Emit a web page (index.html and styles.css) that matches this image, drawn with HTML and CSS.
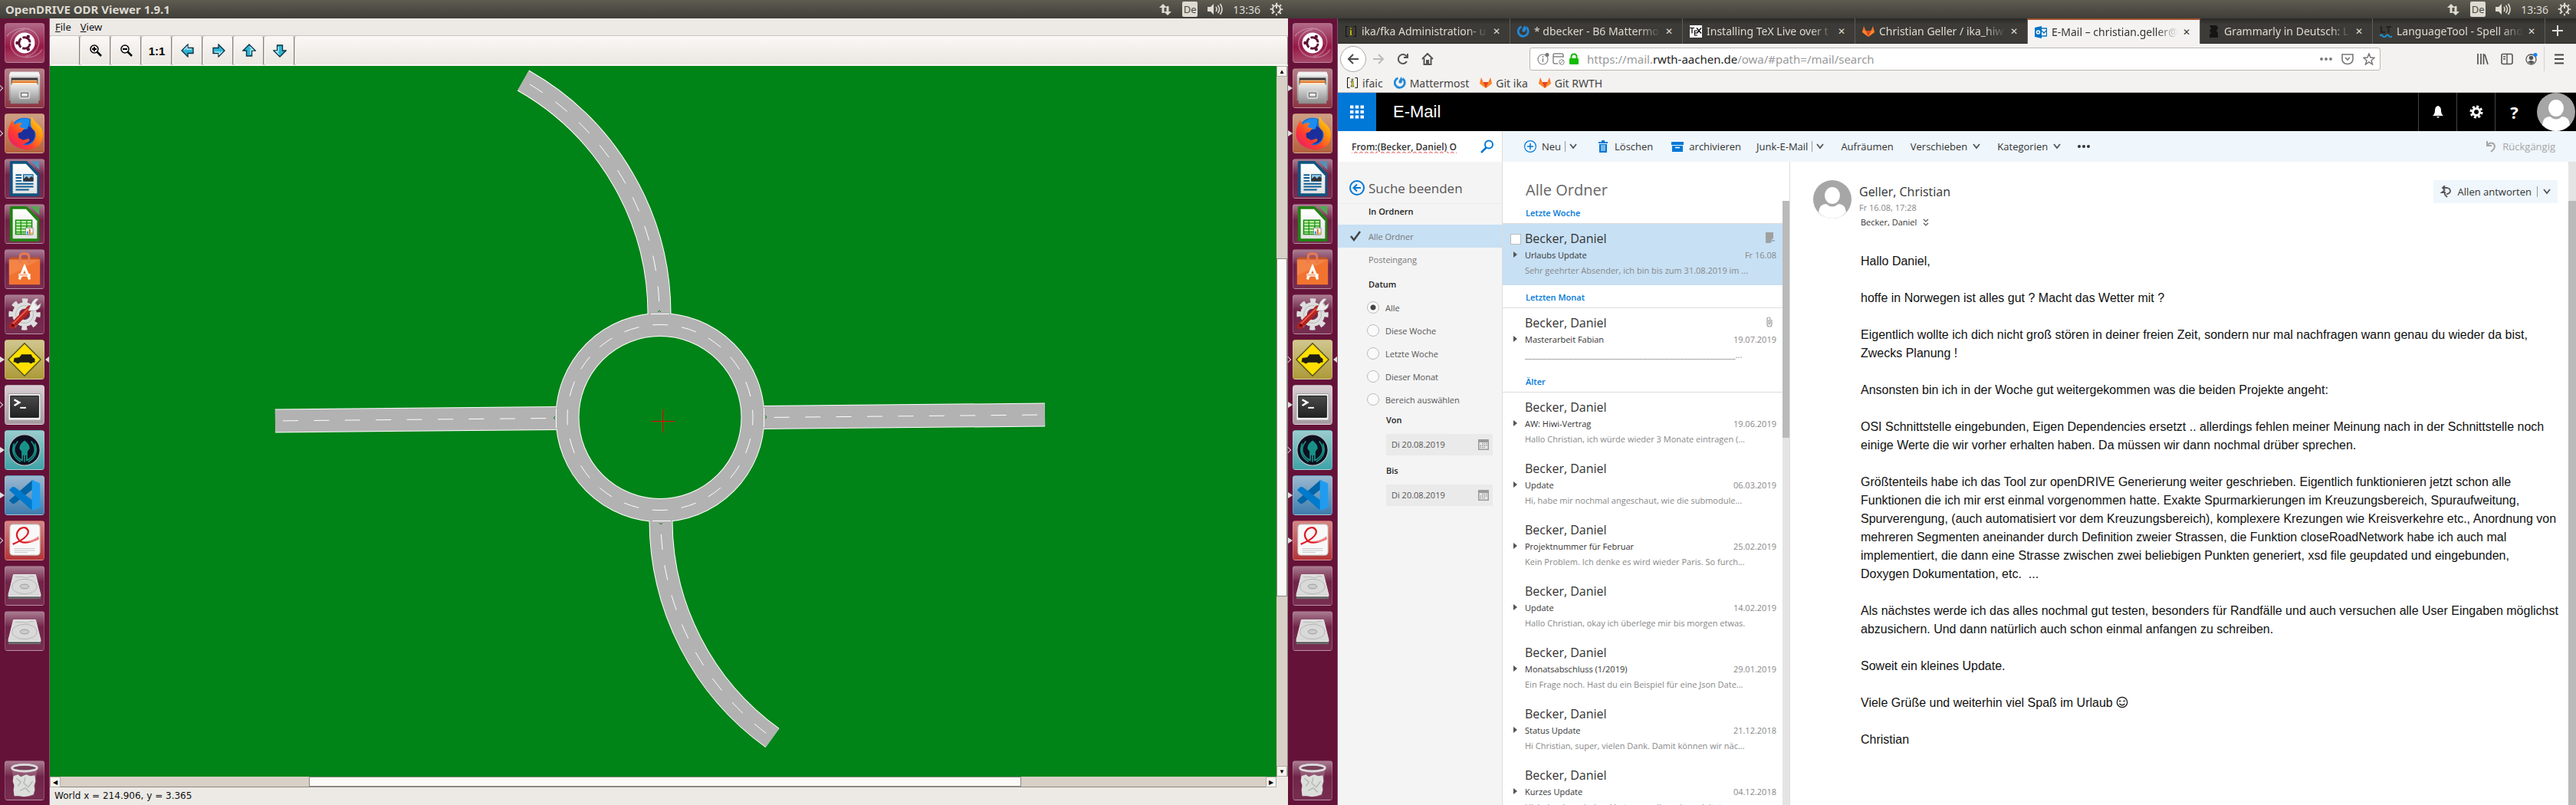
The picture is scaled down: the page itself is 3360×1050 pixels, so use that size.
FILE: index.html
```html
<!DOCTYPE html>
<html lang="de">
<head>
<meta charset="utf-8">
<title>Desktop</title>
<link rel="stylesheet" href="styles.css">
</head>
<body>
<svg class="defs" aria-hidden="true">
  <defs>
    <linearGradient id="metal" x1="0" y1="0" x2="0" y2="1"><stop offset="0" stop-color="#e8e8e8"/><stop offset="1" stop-color="#8a8a8a"/></linearGradient>
    <linearGradient id="paper" x1="0" y1="0" x2="0" y2="1"><stop offset="0" stop-color="#fff"/><stop offset="1" stop-color="#e2e2e2"/></linearGradient>
    <linearGradient id="fox" x1="0" y1="1" x2="1" y2="0"><stop offset="0" stop-color="#e3127a"/><stop offset=".35" stop-color="#ff3b30"/><stop offset=".7" stop-color="#ff9a0c"/><stop offset="1" stop-color="#ffe63b"/></linearGradient>
    <linearGradient id="screen" x1="0" y1="0" x2="0" y2="1"><stop offset="0" stop-color="#4a4a4a"/><stop offset="1" stop-color="#222"/></linearGradient>
  </defs>
  <symbol id="i-dash" viewBox="0 0 52 52">
    <path d="M2 17C12 4 34 2 43 16c7 12-2 27-16 28M50 35c-9 14-33 14-41 0C3 22 12 9 26 8" fill="none" stroke="#fff" stroke-opacity=".3" stroke-width="1.5"/>
    <circle cx="26" cy="26" r="14" fill="#fff"/>
    <circle cx="26" cy="26" r="7.500" fill="none" stroke="#5e1235" stroke-width="3" stroke-dasharray="13.700 2" stroke-dashoffset="-1"/>
    <g fill="#5e1235"><circle cx="16" cy="26" r="2.300"/><circle cx="31" cy="17.300" r="2.300"/><circle cx="31" cy="34.700" r="2.300"/></g>
  </symbol>
  <symbol id="i-files" viewBox="0 0 52 52">
    <path d="M7 4h38l2 5v34H5V9z" fill="url(#metal)"/><path d="M5 9l2-5h38l2 5z" fill="#f2f2f2"/>
    <path d="M8 12h36v10H8z" fill="#3a3a3a"/><path d="M9 15h34v7H9z" fill="#f6b87c"/><path d="M9 17h34v2H9z" fill="#e07020"/><path d="M9 19h34v2H9z" fill="#fff3e0"/>
    <path d="M7 21h38v26H7z" fill="url(#metal)"/><rect x="19" y="30" width="14" height="10" rx="2" fill="#c8c8c8" stroke="#ddd"/><rect x="21.500" y="32.500" width="9" height="5" fill="#eee" stroke="#555"/>
  </symbol>
  <symbol id="i-firefox" viewBox="0 0 52 52">
    <circle cx="26" cy="25" r="20" fill="#0a6fe0"/><circle cx="28" cy="28" r="12" fill="#1b2f9c"/><path d="M13 12q10-9 20-5l-3 13-15 2z" fill="#1c8df0"/>
    <path d="M5 17l4-9 4 6q4-3 10-2-4 3-3 6l6 1-4 5-5 2 1 6 6 3 8-2q2 3-2 5l-6 3q8 3 14-4 5-7 2-14-6-4-6-12 0-5 2-8 3 7 9 11 6 6 6 14 0 18-21 20Q8 46 4 31q-1-8 1-14z" fill="url(#fox)"/>
  </symbol>
  <symbol id="i-writer" viewBox="0 0 52 52">
    <path d="M6 4q0-2 2-2h21l17 17v29q0 2-2 2H8q-2 0-2-2z" fill="#10547f"/><path d="M34 2h12v12z" fill="#5a8fb5"/>
    <path d="M10 6h18l15 16v24H10z" fill="url(#paper)"/>
    <path d="M14 21h8M14 25h8M14 29h8M14 33h24M14 37h24M14 41h18" stroke="#0d5c91" stroke-width="2"/>
    <rect x="24.500" y="20.500" width="13" height="9" fill="#8ec9ec" stroke="#0d4c78"/><path d="M25 29v-3l4-3 3 3 3-3 3 2v4z" fill="#333"/>
  </symbol>
  <symbol id="i-calc" viewBox="0 0 52 52">
    <path d="M6 4q0-2 2-2h21l17 17v29q0 2-2 2H8q-2 0-2-2z" fill="#1f8312"/><path d="M34 2h12v12z" fill="#55a853"/>
    <path d="M10 6h18l15 16v24H10z" fill="url(#paper)"/>
    <path d="M14 21h22v19H14z" fill="#baf0a8" stroke="#188a0c" stroke-width="1.500"/><path d="M14 25h22M14 29h22M14 33h22M14 37h22M21 21v19M29 21v19" stroke="#188a0c" stroke-width="1.200"/>
    <path d="M27.500 31.500h10v9h-10z" fill="#fff" stroke="#888"/><path d="M29 36h2v4h-2z" fill="#1c90e0"/><path d="M32 33h2v7h-2z" fill="#e0601c"/><path d="M35 37h2v3h-2z" fill="#e8b81c"/>
  </symbol>
  <symbol id="i-software" viewBox="0 0 52 52">
    <path d="M5 13l2-3h38l2 3z" fill="#c25428"/><path d="M5 13h42v34H5z" fill="#f1732f"/><path d="M5 13h42l-42 22z" fill="#f59055" opacity=".6"/>
    <path d="M20 18V9q0-4 6-4t6 4v9" fill="none" stroke="#e87a50" stroke-width="3"/>
    <path d="M19 40l7-17 7 17M18 34h16" fill="none" stroke="#fff" stroke-width="3.500"/><path d="M19 34h11" stroke="#f1732f" stroke-width="1"/>
  </symbol>
  <symbol id="i-settings" viewBox="0 0 52 52">
    <circle cx="26" cy="26" r="12" fill="none" stroke="#dedede" stroke-width="9"/>
    <circle cx="26" cy="26" r="18.500" fill="none" stroke="#dedede" stroke-width="6" stroke-dasharray="7.300 7.230" stroke-dashoffset="3.600"/>
    <circle cx="26" cy="26" r="12" fill="none" stroke="#b5b5b5" stroke-width="1"/>
    <path d="M9 42L33 18" stroke="#b3221d" stroke-width="8" stroke-linecap="round"/><path d="M10 39L31 18" stroke="#e45b50" stroke-width="2"/>
    <path d="M31 21l5-11q4-7 9-5l-5 6 3 4 5-4q0 8-8 10z" fill="#eee" stroke="#999" stroke-width=".7"/><circle cx="10" cy="41" r="2" fill="#601"/>
  </symbol>
  <symbol id="i-odr" viewBox="0 0 52 52">
    <path d="M26 4L48 26 26 48 4 26z" fill="#ffdf00" stroke="#55501a" stroke-width="1.500" stroke-linejoin="round"/>
    <path d="M12 24l7-1 3-4h13l2 4 3 2v5h-3q-2 3-5 0H20q-3 3-6 0l-3-1z" fill="#1d1d14"/>
  </symbol>
  <symbol id="i-term" viewBox="0 0 52 52">
    <rect x="4" y="11" width="44" height="36" rx="1" fill="#eee" stroke="#999"/><path d="M7 14h38v29H7z" fill="url(#screen)" stroke="#111"/>
    <path d="M12 19l7 4-7 4" fill="none" stroke="#fff" stroke-width="2.500"/><path d="M20 30h8" stroke="#fff" stroke-width="2"/>
  </symbol>
  <symbol id="i-kraken" viewBox="0 0 52 52">
    <circle cx="26" cy="26" r="21" fill="#0e0f1e" stroke="#b8c4c8" stroke-width="1.200"/>
    <path d="M26 13q7 5 7 11l-3 4v5h-8v-5l-3-4q0-6 7-11z" fill="#179287"/>
    <path d="M17 14q-10 12 0 22 3 3 6 4v-9M35 14q10 12 0 22-3 3-6 4v-9M12 17q-6 16 9 25M40 17q6 16-9 25M26 31v11" fill="none" stroke="#179287" stroke-width="1.700"/>
  </symbol>
  <symbol id="i-code" viewBox="0 0 52 52">
    <path d="M5 33l4 4q2 1 4 0L37 18V5z" fill="#0065a9"/><path d="M5 19l4-4q2-1 4 0l24 18v14z" fill="#007acc"/><path d="M36 5l11 5v32l-11 5z" fill="#1f9cf0"/>
  </symbol>
  <symbol id="i-pdf" viewBox="0 0 52 52">
    <rect x="6" y="4" width="41" height="42" rx="4" fill="#f8f8f8" stroke="#b9b0b0"/>
    <path d="M10 31Q32 22 31 13q-3-7-11-3-9 8 0 17 9 5 25-4" fill="none" stroke="#dd1c25" stroke-width="2.400"/><path d="M27 27q10 0 18-7v5q-8 5-18 2z" fill="#f08080"/>
    <path d="M12 37h28M12 39.500h28M12 42h18" stroke="#c8c8c8"/>
  </symbol>
  <symbol id="i-disk" viewBox="0 0 52 52">
    <path d="M11 11h30l7 28H4z" fill="#d9d9d9" stroke="#eee"/><path d="M4 39h44v5H4z" fill="#6a6a6a"/><path d="M4 39h44v1.500H4z" fill="#fafafa"/>
    <ellipse cx="26" cy="27" rx="17" ry="10" fill="none" stroke="#b4b4b4"/><ellipse cx="26" cy="27" rx="6" ry="3" fill="#ccc" stroke="#999"/><path d="M14 14h9q8 3 10-1h6" fill="none" stroke="#bbb"/>
  </symbol>
  <symbol id="i-trash" viewBox="0 0 52 52">
    <path d="M9 10l4 36q13 4 26 0l4-36z" fill="#fff" fill-opacity=".18"/>
    <path d="M11 20l6-2 4 3 7-3 6 2 6-1 1 8-2 6 1 6-2 6-6 2-7 1-6-1-7 0-1-8 1-6-2-6z" fill="#dcdedb"/><path d="M15 23l6 5-4 6M27 22l-2 8 6 5 6-8M20 40l7-4 6 6" fill="none" stroke="#b4b8b2" stroke-width="1.500"/>
    <ellipse cx="26" cy="9" rx="17" ry="4.500" fill="#764059" stroke="#ddd" stroke-width="3"/>
  </symbol>
  <symbol id="i-net" viewBox="0 0 18 18"><path d="M6 2l5 5H7.500v7h-3V7H1zM12 17l-5-5h3.500V5h3v7H17z"/></symbol>
  <symbol id="i-sound" viewBox="0 0 22 18"><path d="M1 6h4l4-4v14l-4-4H1z"/><path d="M12 6q2 3 0 6M14.500 4q4 5 0 10M17.500 2q5 7 0 14" fill="none" stroke="#dfdbd2" stroke-width="1.600"/></symbol>
  <symbol id="i-power" viewBox="0 0 18 18"><circle cx="9" cy="9" r="5" fill="none" stroke="#dfdbd2" stroke-width="2" stroke-dasharray="27 4.400" stroke-dashoffset="21"/><circle cx="9" cy="9" r="7" fill="none" stroke="#dfdbd2" stroke-width="2.600" stroke-dasharray="2 3.500" stroke-dashoffset="1"/><path d="M8 1h2v7H8z"/></symbol>
  <symbol id="i-gitlab" viewBox="0 0 16 16"><path d="M8 15L0 9l2-8 2.500 6h7L14 1l2 8z" fill="#fc6d26"/><path d="M8 15L4.500 7h7z" fill="#e24329"/><path d="M8 15L0 9l1-3 3.500 1zM8 15l8-6-1-3-3.500 1z" fill="#fca326" opacity=".5"/></symbol>
  <symbol id="i-mm" viewBox="0 0 16 16"><path d="M11.500 2.500a6.500 6.500 0 1 1-6 -.8" fill="none" stroke="#2389d7" stroke-width="2.800"/><path d="M10 0q2 5 .5 7.500Q8 10 6.500 7.500 6 5 10 0z" fill="#2389d7"/></symbol>
  <symbol id="i-ifa" viewBox="0 0 16 16"><path d="M4.500 1.500h-3v13h3M11.500 1.500h3v13h-3" fill="none" stroke="#111"/><path d="M7 3h2v2H7zM6 6h3v6h1v1H6v-1h1V7H6z" fill="#fff200" stroke="#222" stroke-width=".6"/></symbol>
  <symbol id="i-chev" viewBox="0 0 10 10"><path d="M1 2l4 5 4-5" fill="none" stroke="#555" stroke-width="1.800"/></symbol>
  <symbol id="i-cal" viewBox="0 0 14 14"><path d="M0 0h14v14H0zM1.500 4v8.500h11V4z" fill="#9a9a9a" fill-rule="evenodd"/><path d="M5 5.500h7M2.500 8h9M2.500 10.500h7" stroke="#9a9a9a" stroke-width="1.500" stroke-dasharray="1.500 1"/></symbol>
  <symbol id="i-person" viewBox="0 0 50 50"><circle cx="25" cy="25" r="25" fill="#a6a6a6"/><ellipse cx="25" cy="20" rx="10" ry="11" fill="#fff"/><path d="M7 42q1-11 10-11 8 7 16 0 9 0 10 11-8 8-18 8T7 42z" fill="#fff"/></symbol>
  <symbol id="i-arrow" viewBox="0 0 18 18"><path d="M1 9l8-8v4.500h7v7H9V17z" fill="#2fb4d3" stroke="#0b3042" stroke-width="1.300"/><path d="M4 8l4-4v3h6" fill="none" stroke="#b4ecf7" stroke-width="1.300"/></symbol>
</svg>

<div class="desktop">
  <!-- Left monitor: road network viewer -->
  <section class="screen">
    <header class="panel">
      <h1 class="panel-title">OpenDRIVE ODR Viewer 1.9.1</h1>
      <div class="tray">
        <svg class="tray-net"><use href="#i-net"/></svg><span class="lang">De</span>
        <svg class="tray-sound"><use href="#i-sound"/></svg><span class="clock">13:36</span>
        <svg class="tray-net"><use href="#i-power"/></svg>
      </div>
    </header>
    <nav class="launcher" aria-label="Launcher">
      <button class="tile dash" aria-label="Dash"><svg><use href="#i-dash"/></svg></button>
      <button class="tile files hollow" aria-label="Files"><svg><use href="#i-files"/></svg></button>
      <button class="tile firefox hollow" aria-label="Firefox"><svg><use href="#i-firefox"/></svg></button>
      <button class="tile" aria-label="Writer"><svg><use href="#i-writer"/></svg></button>
      <button class="tile" aria-label="Calc"><svg><use href="#i-calc"/></svg></button>
      <button class="tile" aria-label="Software"><svg><use href="#i-software"/></svg></button>
      <button class="tile" aria-label="Settings"><svg><use href="#i-settings"/></svg></button>
      <button class="tile odr solid active" aria-label="ODR Viewer"><svg><use href="#i-odr"/></svg></button>
      <button class="tile term hollow" aria-label="Terminal"><svg><use href="#i-term"/></svg></button>
      <button class="tile kraken solid" aria-label="GitKraken"><svg><use href="#i-kraken"/></svg></button>
      <button class="tile code solid" aria-label="Code"><svg><use href="#i-code"/></svg></button>
      <button class="tile pdf hollow" aria-label="Document Viewer"><svg><use href="#i-pdf"/></svg></button>
      <button class="tile" aria-label="Disk 1"><svg><use href="#i-disk"/></svg></button>
      <button class="tile" aria-label="Disk 2"><svg><use href="#i-disk"/></svg></button>
      <button class="tile trash" aria-label="Trash"><svg><use href="#i-trash"/></svg></button>
    </nav>
    <main class="viewer">
      <div class="menubar"><button><u>F</u>ile</button><button><u>V</u>iew</button></div>
      <div class="toolbar">
        <span class="tool blank"></span>
        <button class="tool" aria-label="Zoom in"><svg viewBox="0 0 18 18"><path d="M10 10l6 6" stroke="#000" stroke-width="2.500"/><circle cx="7" cy="7" r="5" fill="#fff" stroke="#000" stroke-width="1.500"/><path d="M4 7h6M7 4v6" stroke="#000" stroke-width="2"/></svg></button>
        <button class="tool" aria-label="Zoom out"><svg viewBox="0 0 18 18"><path d="M10 10l6 6" stroke="#000" stroke-width="2.500"/><circle cx="7" cy="7" r="5" fill="#fff" stroke="#000" stroke-width="1.500"/><path d="M4 7h6" stroke="#000" stroke-width="2"/></svg></button>
        <button class="tool one">1:1</button>
        <button class="tool" aria-label="Left"><svg><use href="#i-arrow"/></svg></button>
        <button class="tool" aria-label="Right"><svg class="r180"><use href="#i-arrow"/></svg></button>
        <button class="tool" aria-label="Up"><svg class="r90"><use href="#i-arrow"/></svg></button>
        <button class="tool" aria-label="Down"><svg class="r270"><use href="#i-arrow"/></svg></button>
        <span class="tool rest"></span>
      </div>
      <div class="stage">
        <svg class="map" viewBox="65 86 1600 927" preserveAspectRatio="xMidYMid slice">
          <g fill="none">
            <g stroke="#fff" stroke-width="31">
              <path d="M359 549L726 545.500"/><path d="M1363 541L996 544.500"/>
              <path d="M682.500 105A350 350 0 0 1 860 411"/><path d="M1007.500 962.500A350 350 0 0 1 862 679"/>
              <circle cx="861" cy="544.500" r="121"/>
            </g>
            <g stroke="#b2b2b2" stroke-width="29">
              <path d="M359 549L726 545.500"/><path d="M1363 541L996 544.500"/>
              <path d="M682.500 105A350 350 0 0 1 860 411"/><path d="M1007.500 962.500A350 350 0 0 1 862 679"/>
              <circle cx="861" cy="544.500" r="121"/>
            </g>
            <path d="M725.500 533v25M996.500 532v25M849 409.500h24M851 679.500h24" stroke="#fff"/>
            <g stroke="#fff" stroke-dasharray="20 20.400" stroke-dashoffset="-10">
              <path d="M359 549L720 545.500"/><path d="M1363 541L1002 544.500"/>
              <path d="M682.500 105A350 350 0 0 1 860 402"/><path d="M1007.500 962.500A350 350 0 0 1 862 686"/>
            </g>
            <circle cx="861" cy="544.500" r="121" stroke="#fff" stroke-dasharray="20 18.010" stroke-dashoffset="10"/>
            <path d="M724 543l-2 2 2 2M998 542l2 2-2 2M858 407l2-2 2 2M860 682l2 2 2-2" stroke="#008317"/>
            <path d="M850 549.500h30M864.500 534v30" stroke="#f00000"/>
          </g>
        </svg>
        <div class="scroll vertical"><span class="cap">▲</span><span class="gap before"></span><span class="thumb"></span><span class="gap after"></span><span class="cap">▼</span></div>
        <div class="scroll horizontal"><span class="cap">◀</span><span class="gap before"></span><span class="thumb"></span><span class="gap after"></span><span class="cap">▶</span></div>
      </div>
      <footer class="status">World x = 214.906, y = 3.365</footer>
    </main>
  </section>

  <!-- Right monitor: browser with web mail -->
  <section class="screen">
    <header class="panel">
      <div class="tray">
        <svg class="tray-net"><use href="#i-net"/></svg><span class="lang">De</span>
        <svg class="tray-sound"><use href="#i-sound"/></svg><span class="clock">13:36</span>
        <svg class="tray-net"><use href="#i-power"/></svg>
      </div>
    </header>
    <nav class="launcher" aria-label="Launcher">
      <button class="tile dash" aria-label="Dash"><svg><use href="#i-dash"/></svg></button>
      <button class="tile files solid" aria-label="Files"><svg><use href="#i-files"/></svg></button>
      <button class="tile firefox solid" aria-label="Firefox"><svg><use href="#i-firefox"/></svg></button>
      <button class="tile" aria-label="Writer"><svg><use href="#i-writer"/></svg></button>
      <button class="tile" aria-label="Calc"><svg><use href="#i-calc"/></svg></button>
      <button class="tile" aria-label="Software"><svg><use href="#i-software"/></svg></button>
      <button class="tile" aria-label="Settings"><svg><use href="#i-settings"/></svg></button>
      <button class="tile odr hollow active" aria-label="ODR Viewer"><svg><use href="#i-odr"/></svg></button>
      <button class="tile term solid" aria-label="Terminal"><svg><use href="#i-term"/></svg></button>
      <button class="tile kraken hollow" aria-label="GitKraken"><svg><use href="#i-kraken"/></svg></button>
      <button class="tile code solid" aria-label="Code"><svg><use href="#i-code"/></svg></button>
      <button class="tile pdf solid" aria-label="Document Viewer"><svg><use href="#i-pdf"/></svg></button>
      <button class="tile" aria-label="Disk 1"><svg><use href="#i-disk"/></svg></button>
      <button class="tile" aria-label="Disk 2"><svg><use href="#i-disk"/></svg></button>
      <button class="tile trash" aria-label="Trash"><svg><use href="#i-trash"/></svg></button>
    </nav>
    <main class="browser">
      <div class="tabs">
        <button class="tab"><svg><use href="#i-ifa"/></svg><span>ika/fka Administration- u</span><i>✕</i></button>
        <button class="tab"><svg><use href="#i-mm"/></svg><span>* dbecker - B6 Mattermo</span><i>✕</i></button>
        <button class="tab"><svg viewBox="0 0 16 16"><path d="M0 0h16v16H0z" fill="#fff"/><path d="M0 3.500h6M3 3.500v7M6 7h4M6 10h3M6 13h4M6.500 7v6M9 3.500l6 7M15 3.500l-6 7" stroke="#000" stroke-width="1.200"/></svg><span>Installing TeX Live over t</span><i>✕</i></button>
        <button class="tab"><svg><use href="#i-gitlab"/></svg><span>Christian Geller / ika_hiw</span><i>✕</i></button>
        <button class="tab current"><svg viewBox="0 0 16 16"><path d="M0 2l9-2v16l-9-2z" fill="#0072c6"/><circle cx="4.500" cy="8" r="2" fill="none" stroke="#fff" stroke-width="1.500"/><path d="M9 3h6.500v10H9M9 6l3 3 4-4" fill="none" stroke="#0072c6" stroke-width="1.300"/></svg><span>E-Mail – christian.geller@</span><i>✕</i></button>
        <button class="tab"><svg viewBox="0 0 16 16"><path d="M3 0h7q4 0 4 4l-2 3 2 3v6H3v-4l2-2-2-3 2-3z" fill="#151513"/></svg><span>Grammarly in Deutsch: L</span><i>✕</i></button>
        <button class="tab"><svg viewBox="0 0 16 16"><path d="M2 1v8h5M8 2h7M11.500 2v8" fill="none" stroke="#222" stroke-width="2"/><path d="M0 14q2-3 4 0t4 0 4 0 4 0" fill="none" stroke="#1c96d4" stroke-width="2"/></svg><span>LanguageTool - Spell and</span><i>✕</i></button>
        <button class="newtab" aria-label="Neuer Tab"><svg viewBox="0 0 14 14"><path d="M7 0v14M0 7h14" stroke="#ddd" stroke-width="2"/></svg></button>
      </div>
      <div class="navbar">
        <button class="back" aria-label="Zurück"><svg viewBox="0 0 16 16"><path d="M15 8H2M8 2L2 8l6 6" fill="none" stroke="#4a4a4a" stroke-width="2"/></svg></button>
        <button class="nb" aria-label="Vor"><svg viewBox="0 0 16 16"><path d="M1 8h13M8 2l6 6-6 6" fill="none" stroke="#bbb" stroke-width="2"/></svg></button>
        <button class="nb" aria-label="Neu laden"><svg viewBox="0 0 16 16"><path d="M13 11a6 6 0 1 1 0-6M14 1v5H9" fill="none" stroke="#555" stroke-width="2"/></svg></button>
        <button class="nb" aria-label="Startseite"><svg viewBox="0 0 16 16"><path d="M1 8l7-7 7 7M3.500 7v8h9V7M7 15v-5h2v5" fill="none" stroke="#555" stroke-width="2"/></svg></button>
        <div class="urlbar">
          <svg viewBox="0 0 16 16"><circle cx="7.500" cy="8.500" r="6.500" fill="none" stroke="#888" stroke-width="1.200"/><path d="M7.500 7v5M7.500 4v2" stroke="#888" stroke-width="1.500"/><circle cx="13" cy="2.500" r="2.500" fill="#777"/></svg>
          <svg viewBox="0 0 16 16"><path d="M7 14H3q-2 0-2-2V3q0-2 2-2h9q2 0 2 2v3M1 5h13" fill="none" stroke="#888" stroke-width="1.500"/><circle cx="12" cy="12" r="3.300" fill="none" stroke="#888"/><path d="M10 14l4-4" stroke="#888"/></svg>
          <svg viewBox="0 0 16 16"><rect x="2" y="7" width="12" height="8" rx="1" fill="#12bc00"/><path d="M4.500 8V5q0-3.500 3.500-3.500T11.500 5v3" fill="none" stroke="#12bc00" stroke-width="2"/></svg>
          <a class="url" href="#">https://mail.<b>rwth-aachen.de</b>/owa/#path=/mail/search</a>
          <svg viewBox="0 0 16 16" class="push"><g fill="#777"><circle cx="2" cy="8" r="1.900"/><circle cx="8" cy="8" r="1.900"/><circle cx="14" cy="8" r="1.900"/></g></svg>
          <svg viewBox="0 0 16 16"><path d="M1 2h14v6q0 6-7 6.500Q1 14 1 8z" fill="none" stroke="#777" stroke-width="1.600"/><path d="M5 6l3 3 3-3" fill="none" stroke="#777" stroke-width="1.600"/></svg>
          <svg viewBox="0 0 16 16"><path d="M8 1l2 5 5 .5-4 3.500 1.500 5L8 12l-4.500 3L5 10 1 6.500 6 6z" fill="none" stroke="#777" stroke-width="1.500"/></svg>
        </div>
        <div class="navtools">
          <button class="nb" aria-label="Bibliothek"><svg viewBox="0 0 16 16"><path d="M2 1v14M6 1v14M9.500 1v14M11 2l4 13" fill="none" stroke="#555" stroke-width="1.700"/></svg></button>
          <button class="nb" aria-label="Seitenleiste"><svg viewBox="0 0 16 16"><rect x="1" y="1.500" width="14" height="13" rx="2" fill="none" stroke="#555" stroke-width="1.600"/><path d="M8 2v12M3 5h3M3 8h3" stroke="#555" stroke-width="1.400"/></svg></button>
          <button class="nb" aria-label="Konto"><svg viewBox="0 0 16 16"><circle cx="7.500" cy="8.500" r="6.500" fill="none" stroke="#555" stroke-width="1.300"/><circle cx="7.500" cy="6.500" r="2.800" fill="#555"/><path d="M3 12q4-4 9 0-4 4-9 0z" fill="#555"/><circle cx="13" cy="2.500" r="2.500" fill="#0a84ff"/></svg></button>
          <button class="nb menu" aria-label="Menü"><svg viewBox="0 0 16 16"><path d="M2 2.500h12M2 8h12M2 13.500h12" stroke="#444" stroke-width="2"/></svg></button>
        </div>
      </div>
      <div class="bookmarks">
        <a href="#"><svg><use href="#i-ifa"/></svg>ifaic</a><a href="#"><svg><use href="#i-mm"/></svg>Mattermost</a><a href="#"><svg><use href="#i-gitlab"/></svg>Git ika</a><a href="#"><svg><use href="#i-gitlab"/></svg>Git RWTH</a>
      </div>
      <div class="suite">
        <button class="waffle" aria-label="Apps"><svg viewBox="0 0 18 18"><path d="M0 2.500h18M0 9h18M0 15.500h18" stroke="#fff" stroke-width="4" stroke-dasharray="4.500 2.250"/></svg></button>
        <h2>E-Mail</h2>
        <button class="sb" aria-label="Benachrichtigungen"><svg viewBox="0 0 18 18"><path d="M9 1q4 1 4 6t3 7H2q3-2 3-7t4-6zM7 15h4l-2 2z" fill="#fff"/></svg></button>
        <button class="sb" aria-label="Einstellungen"><svg viewBox="0 0 18 18"><circle cx="9" cy="9" r="4.500" fill="none" stroke="#fff" stroke-width="3"/><circle cx="9" cy="9" r="7" fill="none" stroke="#fff" stroke-width="3" stroke-dasharray="3 2.500"/></svg></button>
        <button class="sb help">?</button>
        <svg class="me"><use href="#i-person"/></svg>
      </div>
      <div class="commands">
        <form class="search"><input aria-label="Suche" value="From:(Becker, Daniel) O"><button type="button" aria-label="Suchen"><svg viewBox="0 0 18 18"><circle cx="11" cy="6.500" r="5" fill="none" stroke="#0078d7" stroke-width="2"/><path d="M7.500 10.500L1 17" stroke="#0078d7" stroke-width="2.500"/></svg></button></form>
        <button class="cmd c1"><svg viewBox="0 0 16 16"><circle cx="8" cy="8" r="7.400" fill="none" stroke="#0078d7" stroke-width="1.200"/><path d="M8 4v8M4 8h8" stroke="#0078d7" stroke-width="1.500"/></svg>Neu<span class="bar"></span><svg class="chev"><use href="#i-chev"/></svg></button>
        <button class="cmd c2"><svg viewBox="0 0 16 16"><path d="M3 5h10v11H3zM2 2h12v2H2zM6 0h4v2H6z" fill="#0078d7"/><path d="M6 6v8M8 6v8M10 6v8" stroke="#eff6fc"/></svg>Löschen</button>
        <button class="cmd c3"><svg viewBox="0 0 16 16"><path d="M0 2h16v4H0zM1 7h14v8H1z" fill="#0078d7"/><path d="M5 9.500h6" stroke="#fff" stroke-width="1.500"/></svg>archivieren</button>
        <button class="cmd junk">Junk-E-Mail<span class="bar"></span><svg class="chev"><use href="#i-chev"/></svg></button>
        <button class="cmd">Aufräumen</button>
        <button class="cmd">Verschieben<svg class="chev"><use href="#i-chev"/></svg></button>
        <button class="cmd">Kategorien<svg class="chev"><use href="#i-chev"/></svg></button>
        <button class="cmd" aria-label="Mehr"><svg viewBox="0 0 16 16"><g fill="#333"><circle cx="2" cy="8" r="2"/><circle cx="8" cy="8" r="2"/><circle cx="14" cy="8" r="2"/></g></svg></button>
        <button class="cmd undo" disabled><svg viewBox="0 0 16 16"><path d="M3 1v6h6M3 7q3-5 8-3 5 5-3 11" fill="none" stroke="#a6a6a6" stroke-width="2"/></svg>Rückgängig</button>
      </div>
      <div class="mail">
        <aside class="filters">
          <button class="leave"><svg viewBox="0 0 20 20"><circle cx="10" cy="10" r="9" fill="none" stroke="#0078d7" stroke-width="2"/><path d="M15 10H6M10 5.500L5.500 10l4.500 4.500" fill="none" stroke="#0078d7" stroke-width="2"/></svg>Suche beenden</button>
          <h3 class="in-folders">In Ordnern</h3>
          <button class="folder on"><svg viewBox="0 0 14 14"><path d="M1 7l4 5 8-11" fill="none" stroke="#444" stroke-width="2.500"/></svg>Alle Ordner</button>
          <button class="folder">Posteingang</button>
          <h3 class="date-head">Datum</h3>
          <label class="radio"><input type="radio" name="d" checked>Alle</label>
          <label class="radio"><input type="radio" name="d">Diese Woche</label>
          <label class="radio"><input type="radio" name="d">Letzte Woche</label>
          <label class="radio"><input type="radio" name="d">Dieser Monat</label>
          <label class="radio"><input type="radio" name="d">Bereich auswählen</label>
          <label class="range">Von<span class="date"><input value="Di 20.08.2019"><svg><use href="#i-cal"/></svg></span></label>
          <label class="range">Bis<span class="date"><input value="Di 20.08.2019"><svg><use href="#i-cal"/></svg></span></label>
        </aside>
        <section class="list">
          <h2>Alle Ordner</h2>
          <div class="rows">
            <h4>Letzte Woche</h4>
            <article class="row on"><input type="checkbox" aria-label="Auswählen"><h5>Becker, Daniel</h5><svg class="flag" viewBox="0 0 14 14"><path d="M2 0h10v8l-3 2v4H2z" fill="#a0a0a0"/><path d="M14 11H7M9 9l-2 2 2 2" fill="none" stroke="#8fa6b8" stroke-width="1.300"/></svg><p class="sub">Urlaubs Update<time>Fr 16.08</time></p><p class="pre">Sehr geehrter Absender, ich bin bis zum 31.08.2019 im ...</p></article>
            <h4>Letzten Monat</h4>
            <article class="row"><h5>Becker, Daniel</h5><svg class="flag" viewBox="0 0 14 14"><path d="M10 4v6q0 3-3 3t-3-3V3q0-2 2-2t2 2v6q0 1-1 1T6 9V4" fill="none" stroke="#a0a0a0" stroke-width="1.200"/></svg><p class="sub">Masterarbeit Fabian<time>19.07.2019</time></p><p class="pre">_________________________________________________________...</p></article>
            <h4>Älter</h4>
            <article class="row"><h5>Becker, Daniel</h5><p class="sub">AW: Hiwi-Vertrag<time>19.06.2019</time></p><p class="pre">Hallo Christian, ich würde wieder 3 Monate eintragen (...</p></article>
            <article class="row"><h5>Becker, Daniel</h5><p class="sub">Update<time>06.03.2019</time></p><p class="pre">Hi, habe mir nochmal angeschaut, wie die submodule...</p></article>
            <article class="row"><h5>Becker, Daniel</h5><p class="sub">Projektnummer für Februar<time>25.02.2019</time></p><p class="pre">Kein Problem. Ich denke es wird wieder Paris. So furch...</p></article>
            <article class="row"><h5>Becker, Daniel</h5><p class="sub">Update<time>14.02.2019</time></p><p class="pre">Hallo Christian, okay ich überlege mir bis morgen etwas.</p></article>
            <article class="row"><h5>Becker, Daniel</h5><p class="sub">Monatsabschluss (1/2019)<time>29.01.2019</time></p><p class="pre">Ein Frage noch. Hast du ein Beispiel für eine Json Date...</p></article>
            <article class="row"><h5>Becker, Daniel</h5><p class="sub">Status Update<time>21.12.2018</time></p><p class="pre">Hi Christian, super, vielen Dank. Damit können wir näc...</p></article>
            <article class="row"><h5>Becker, Daniel</h5><p class="sub">Kurzes Update<time>04.12.2018</time></p><p class="pre">Hi, habe das mit dem Vertrag an die weitergeleitet ...</p></article>
          </div>
          <div class="listbar"><span></span></div>
        </section>
        <section class="reading">
          <header class="from">
            <svg class="avatar"><use href="#i-person"/></svg>
            <div class="who"><h3>Geller, Christian</h3><p class="when">Fr 16.08, 17:28</p><p class="to">Becker, Daniel<svg viewBox="0 0 8 10"><path d="M1 1l3 3 3-3M1 6l3 3 3-3" fill="none" stroke="#555" stroke-width="1.200"/></svg></p></div>
            <button class="reply"><svg viewBox="0 0 14 16"><path d="M5 0L2 3l3 3M2 3h6q4 1 4 4t-4 4H7M5 6L1 9h4v3l3 3" fill="none" stroke="#555" stroke-width="1.800"/></svg>Allen antworten<span class="bar"></span><svg class="chev"><use href="#i-chev"/></svg></button>
          </header>
          <div class="text">
            <p>Hallo Daniel,</p>
            <p>hoffe in Norwegen ist alles gut ? Macht das Wetter mit ?</p>
            <p>Eigentlich wollte ich dich nicht groß stören in deiner freien Zeit, sondern nur mal nachfragen wann genau du wieder da bist,<br>Zwecks Planung !</p>
            <p>Ansonsten bin ich in der Woche gut weitergekommen was die beiden Projekte angeht:</p>
            <p>OSI Schnittstelle eingebunden, Eigen Dependencies ersetzt .. allerdings fehlen meiner Meinung nach in der Schnittstelle noch<br>einige Werte die wir vorher erhalten haben. Da müssen wir dann nochmal drüber sprechen.</p>
            <p>Größtenteils habe ich das Tool zur openDRIVE Generierung weiter geschrieben. Eigentlich funktionieren jetzt schon alle<br>Funktionen die ich mir erst einmal vorgenommen hatte. Exakte Spurmarkierungen im Kreuzungsbereich, Spuraufweitung,<br>Spurverengung, (auch automatisiert vor dem Kreuzungsbereich), komplexere Krezungen wie Kreisverkehre etc., Anordnung von<br>mehreren Segmenten aneinander durch Definition zweier Strassen, die Funktion closeRoadNetwork habe ich auch mal<br>implementiert, die dann eine Strasse zwischen zwei beliebigen Punkten generiert, xsd file geupdated und eingebunden,<br>Doxygen Dokumentation, etc.&nbsp; ...</p>
            <p>Als nächstes werde ich das alles nochmal gut testen, besonders für Randfälle und auch versuchen alle User Eingaben möglichst<br>abzusichern. Und dann natürlich auch schon einmal anfangen zu schreiben.</p>
            <p>Soweit ein kleines Update.</p>
            <p>Viele Grüße und weiterhin viel Spaß im Urlaub <svg viewBox="0 0 16 16" role="img" aria-label="Smiley"><circle cx="8" cy="8" r="6.700" fill="none" stroke="#111" stroke-width="1.200"/><path d="M4 7q1-2 2.500 0M9.500 7q1-2 2.500 0M4.500 10q3.500 3.500 7 0" fill="none" stroke="#111" stroke-width="1.200"/></svg></p>
            <p>Christian</p>
          </div>
          <div class="readbar"><span></span></div>
        </section>
      </div>
    </main>
  </section>
</div>
</body>
</html>
```
FILE: styles.css
```css
* { box-sizing: border-box; }
body { margin: 0; font-family: "Open Sans", "Noto Sans", sans-serif; font-size: 13px; color: #333; }
h1, h2, h3, h4, h5, p { margin: 0; font-weight: 400; }
button, input { font: inherit; color: inherit; border: 0; background: none; padding: 0; margin: 0; }
a { color: inherit; text-decoration: none; }
svg { display: block; flex: none; width: 16px; height: 16px; }
.defs { position: absolute; width: 0; height: 0; }

.desktop { display: grid; grid-template-columns: 1fr 1fr; height: 100vh; overflow: hidden; }
.screen { display: grid; grid-template: 24px minmax(0, 1fr) / 65px minmax(0, 1fr); min-height: 0; }

/* Top panel */
.panel { grid-column: 1 / -1; display: flex; align-items: center; padding: 0 6px 0 7px; background: linear-gradient(#5e5b50, #3f3e39); color: #dfdbd2; font-family: "Noto Sans", sans-serif; }
.panel-title { font-size: 15px; font-weight: 700; line-height: 24px; }
.tray { display: flex; align-items: center; margin-left: auto; fill: #dfdbd2; }
.tray-net { width: 18px; height: 18px; }
.tray-sound { width: 22px; height: 18px; margin-left: 12px; }
.lang { margin-left: 13px; width: 20px; line-height: 20px; border-radius: 2px; background: #dfdbd2; color: #4a4841; text-align: center; font-size: 13px; }
.clock { margin: 0 12px; font-size: 14px; }

/* Launcher */
.launcher { display: flex; flex-direction: column; gap: 7px; padding: 6px; background: #651239; border-right: 1px solid #8a4a6c; }
.tile { position: relative; width: 52px; height: 52px; border-radius: 4px; border: 1px solid rgba(255,255,255,.18); background: linear-gradient(rgba(255,255,255,.45), rgba(255,255,255,.08) 40%, rgba(255,255,255,.12)); }
.tile svg { width: 50px; height: 50px; }
.tile.dash { background: linear-gradient(#b06a88, #971744 60%, #a84a6a); }
.tile.files { background: linear-gradient(#b5808a, #8c3440); }
.tile.firefox { background: linear-gradient(#cda085, #b5603c); }
.tile.odr { background: linear-gradient(#d0c690, #ad9a38); }
.tile.term { background: linear-gradient(#d8ced3, #a899a0); }
.tile.kraken { background: linear-gradient(#9accce, #3fa3a8); }
.tile.code { background: linear-gradient(#9bb8d0, #3e7dae); }
.tile.pdf { background: linear-gradient(#d58585, #b43538); }
.tile.trash { margin-top: auto; }
.solid::before, .hollow::before { content: ""; position: absolute; left: -7px; top: 21px; border: solid transparent; border-width: 4px 0 4px 6px; border-left-color: #ddd; }
.hollow::before { width: 5px; height: 5px; left: -10px; top: 22px; border: solid #ccc; border-width: 1px 1px 0 0; transform: rotate(45deg); }
.active::after { content: ""; position: absolute; right: -7px; top: 21px; border: solid transparent; border-width: 4px 5px 4px 0; border-right-color: #ddd; }

/* Road viewer */
.viewer { display: flex; flex-direction: column; min-height: 0; background: #edeae6; }
.menubar { display: flex; gap: 12px; height: 23px; padding: 0 7px; font: 13px "Noto Sans", sans-serif; color: #111; border-bottom: 1px solid #c8c4be; }
.toolbar { display: flex; gap: 1px; height: 39px; border-bottom: 1px solid #f8f6f3; background: #cfcac4; }
.tool { display: flex; align-items: center; justify-content: center; width: 39px; border: 1px solid #fbfaf8; border-right-color: #8d8681; border-radius: 3px; background: linear-gradient(#faf8f5, #eae6e1); }
.tool svg { width: 18px; height: 18px; }
.tool.rest { flex: 1; }
.tool.one { font: bold 15px "Liberation Sans", sans-serif; color: #000; }
.r90 { transform: rotate(90deg); } .r180 { transform: rotate(180deg); } .r270 { transform: rotate(270deg); }
.stage { flex: 1; min-height: 0; display: grid; grid-template: minmax(0, 1fr) 14px / minmax(0, 1fr) 15px; }
.map { width: 100%; height: 100%; background: #008317; }
.scroll { display: flex; background: #d8cfc6; color: #000; font-size: 8px; border: 0 solid #8d8681; }
.scroll.vertical { flex-direction: column; border-right-width: 1px; }
.scroll.horizontal { border-bottom-width: 1px; }
.cap { flex: none; width: 14px; height: 14px; text-align: center; background: #f6f3ef; border: 1px solid #b4aca4; line-height: 11px; }
.thumb { background: #fbf9f6; border: 1px solid #8d8681; }
.vertical .before { flex: 237; } .vertical .thumb { flex: 439; } .vertical .after { flex: 221; }
.horizontal .before { flex: 324; } .horizontal .thumb { flex: 927; } .horizontal .after { flex: 319; }
.status { height: 23px; padding-left: 6px; font: 12px/23px "DejaVu Sans", sans-serif; color: #111; }

/* Browser chrome */
.browser { display: flex; flex-direction: column; min-width: 0; min-height: 0; background: #fff; }
.tabs { display: flex; flex: none; height: 33px; background: linear-gradient(#2a2926, #3c3b37 8px); font: 14px "Noto Sans", sans-serif; color: #dfdbd2; border-bottom: 1px solid #262522; }
.tab { display: flex; flex: 0 1 225px; min-width: 0; align-items: center; gap: 6px; padding: 0 12px 0 9px; height: 33px; text-align: left; border-right: 1px solid #5e5d58; }
.tab span { flex: 1; min-width: 0; overflow: hidden; white-space: nowrap; -webkit-mask-image: linear-gradient(90deg, #000 83%, transparent); mask-image: linear-gradient(90deg, #000 83%, transparent); }
.tab i { font-style: normal; font-size: 12px; }
.tab.current { background: #f4f3f1; color: #333; border-top: 2px solid #a0522f; }
.newtab { margin-left: 9px; }
.newtab svg { width: 14px; height: 14px; }
.navbar { display: flex; flex: none; align-items: center; height: 39px; padding: 0 11px 0 3px; background: #f4f2f0; }
.back { display: grid; place-items: center; width: 34px; height: 34px; border: 1px solid #aaa; border-radius: 50%; background: #fff; }
.nb { display: grid; place-items: center; width: 32px; height: 32px; }
.urlbar { display: flex; flex: 1; align-items: center; gap: 4px; height: 30px; margin: 0 117px; padding: 0 6px 0 9px; border: 1px solid #bbb8b4; border-radius: 3px; background: #fff; font: 15px "Noto Sans", sans-serif; color: #999; }
.url { margin-left: 5px; } .url b { font-weight: 400; color: #222; }
.urlbar .push { margin-left: auto; } .urlbar .push ~ svg { margin-left: 8px; }
.navtools { display: flex; }
.navtools .menu { width: 31px; padding-left: 7px; border-left: 1px solid #d5d3d0; }
.bookmarks { display: flex; flex: none; gap: 14px; height: 25px; padding: 0 11px; align-items: center; background: #f4f2f0; border-bottom: 1px solid #c8c5c1; font: 14px "Noto Sans", sans-serif; color: #444; }
.bookmarks a { display: flex; align-items: center; gap: 5px; }

/* Mail header and commands */
.suite { display: flex; flex: none; height: 50px; align-items: center; background: #000; color: #fff; }
.waffle { display: grid; place-items: center; width: 50px; height: 50px; background: #0078d7; }
.waffle svg, .sb svg { width: 18px; height: 18px; }
.suite h2 { flex: 1; margin-left: 22px; font: 22px "Liberation Sans", sans-serif; }
.sb { display: grid; place-items: center; width: 50px; height: 50px; border-left: 1px solid #444; }
.help { font-size: 22px; font-weight: 700; }
.me { width: 50px; height: 50px; margin: 0 1px 0 5px; }
.commands { display: flex; flex: none; height: 40px; background: #eff6fc; }
.search { display: flex; flex: 0 0 215px; align-items: center; padding: 0 10px 0 18px; background: #fff; border-right: 1px solid #ddd; }
.search input { flex: 1; min-width: 0; font-size: 12px; font-weight: 600; text-decoration: underline wavy #d33 1px; }
.search svg { width: 18px; height: 18px; }
.cmd { display: flex; align-items: center; margin-left: 22px; gap: 7px; white-space: nowrap; }
.cmd.c1 { margin-left: 28px; } .cmd.c2 { margin-left: 26px; } .cmd.c3 { margin-left: 24px; } .cmd.junk { margin-left: 20px; }
.chev { width: 10px; height: 10px; }
.bar { width: 1px; height: 14px; background: #999; }
.cmd .bar, .cmd .bar + .chev { margin-left: -2px; }
.cmd.undo { margin: 0 27px 0 auto; color: #a6a6a6; }

/* Mail columns */
.mail { flex: 1; min-height: 0; display: grid; grid-template-columns: 215px 375px minmax(0, 1fr); overflow: hidden; }
.filters { display: flex; flex-direction: column; background: #f4f4f4; border-right: 1px solid #ddd; font-size: 11px; color: #555; }
.leave { display: flex; align-items: center; gap: 5px; height: 55px; padding: 14px 0 0 15px; font-size: 17px; border-bottom: 1px solid #ececec; }
.leave svg { width: 20px; height: 20px; }
.filters h3 { padding-left: 40px; font-size: 11px; font-weight: 600; color: #222; line-height: 20px; }
.filters .in-folders { height: 27px; }
.folder { display: flex; flex: none; align-items: center; height: 30px; padding-left: 40px; color: #777; }
.folder.on { padding-left: 16px; gap: 10px; background: #c7e0f4; }
.folder svg { width: 14px; height: 14px; }
.filters .date-head { margin: 8px 0 5px; }
.radio { display: flex; flex: none; align-items: center; gap: 8px; height: 30px; padding-left: 38px; }
.radio input { appearance: none; width: 16px; height: 16px; border: 1px solid #bbb; border-radius: 50%; background: #fafafa; }
.radio input:checked { background: radial-gradient(#444 3px, #fafafa 4px); }
.range { display: block; padding: 3px 12px 8px 63px; font-weight: 600; color: #222; line-height: 18px; }
.date { display: flex; align-items: center; height: 28px; margin-top: 9px; padding: 0 5px 0 7px; background: #eaeaea; color: #555; font-weight: 400; }
.date input { flex: 1; min-width: 0; }
.date svg { width: 14px; height: 14px; }

.list { position: relative; border-right: 1px solid #ddd; overflow: hidden; }
.list h2 { height: 51px; padding: 24px 0 0 30px; font-size: 20px; line-height: 26px; color: #666; }
.rows { margin-right: 9px; }
.rows h4 { height: 30px; padding-left: 30px; border-bottom: 1px solid #ddd; font-size: 11px; font-weight: 600; line-height: 32px; color: #0078d7; }
.row { position: relative; height: 80px; padding: 8px 8px 0 29px; }
.row.on { background: #c7e0f4; }
.row h5 { font-size: 16px; line-height: 22px; margin-bottom: 1px; }
.row input { position: absolute; left: 10px; top: 13px; appearance: none; width: 14px; height: 14px; border: 1px solid #bbb; background: #fff; }
.flag { position: absolute; right: 10px; top: 11px; width: 14px; height: 14px; }
.sub { display: flex; justify-content: space-between; font-size: 11px; line-height: 20px; }
.sub::before { content: ""; position: absolute; left: 14px; top: 36px; border: solid transparent; border-width: 4px 0 4px 5px; border-left-color: #555; }
.sub time { color: #888; }
.pre { font-size: 11px; line-height: 20px; color: #888; white-space: nowrap; }
.listbar { position: absolute; right: 0; top: 51px; bottom: 0; width: 9px; background: #e4e4e4; }
.listbar span { display: block; height: 309px; background: #bababa; }

.reading { position: relative; padding: 24px 24px 0 30px; }
.from { display: flex; align-items: flex-start; gap: 10px; height: 94px; }
.avatar { width: 50px; height: 50px; }
.who { flex: 1; }
.who h3 { font-size: 16px; line-height: 30px; }
.when { font-size: 11px; line-height: 12px; color: #888; }
.to { display: flex; align-items: center; gap: 8px; padding-left: 2px; font-size: 11px; line-height: 26px; }
.to svg { width: 8px; height: 10px; }
.reply { display: flex; align-items: center; gap: 7px; height: 30px; padding: 0 9px; background: #eff6fc; }
.text { padding-left: 62px; font: 16px/24px "Liberation Sans", sans-serif; color: #111; white-space: nowrap; }
.text p { margin-bottom: 24px; }
.text svg { display: inline-block; vertical-align: -2px; }
.readbar { position: absolute; right: 0; top: 0; bottom: 0; width: 10px; padding-top: 51px; background: #e4e4e4; }
.readbar span { display: block; height: 100%; background: #bababa; }
```
